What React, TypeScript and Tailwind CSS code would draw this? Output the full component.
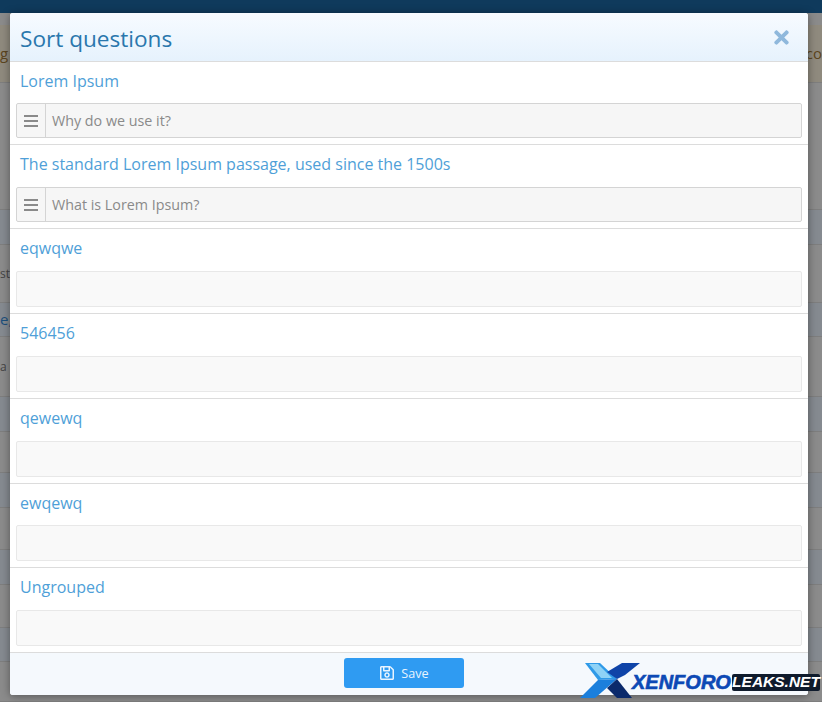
import React from "react";
import { FaRegSave, FaTimes } from "react-icons/fa";

const groups = [
  { title: "Lorem Ipsum", item: "Why do we use it?", rowH: "h-[83px]", titleH: "h-[38px]", gap: "mb-[3px]" },
  { title: "The standard Lorem Ipsum passage, used since the 1500s", item: "What is Lorem Ipsum?", rowH: "h-[84px]", titleH: "h-[38px]", gap: "mb-[4px]" },
  { title: "eqwqwe", rowH: "h-[85px]", titleH: "h-[38px]", gap: "mb-[4px]" },
  { title: "546456", rowH: "h-[85px]", titleH: "h-[38px]", gap: "mb-[4px]" },
  { title: "qewewq", rowH: "h-[85px]", titleH: "h-[38px]", gap: "mb-[4px]" },
  { title: "ewqewq", rowH: "h-[84px]", titleH: "h-[38px]", gap: "mb-[3px]" },
  { title: "Ungrouped", rowH: "h-[85px]", titleH: "h-[38px]", gap: "mb-[4px]" },
];

// rows of the dimmed forum page behind the overlay
const backdropRows = [
  { h: "h-[58px]", bg: "bg-[#8f8a7e]", left: "g", right: "co", text: "text-[#5c4520] text-[15px]" },
  { h: "h-[127px]", bg: "bg-[#8b8b8b]" },
  { h: "h-[35px]", bg: "bg-[#858a90]" },
  { h: "h-[58px]", bg: "bg-[#8b8b8b]", left: "st", text: "text-[#444444] text-[12px]" },
  { h: "h-[34px]", bg: "bg-[#858a90]", left: "e,", text: "text-[#1d4f7c] text-[15px]" },
  { h: "h-[60px]", bg: "bg-[#8b8b8b]", left: "a", text: "text-[#444444] text-[12px]" },
  { h: "h-[35px]", bg: "bg-[#858a90]" },
  { h: "h-[41px]", bg: "bg-[#8b8b8b]" },
  { h: "h-[35px]", bg: "bg-[#858a90]" },
  { h: "h-[42px]", bg: "bg-[#8b8b8b]" },
  { h: "h-[35px]", bg: "bg-[#858a90]" },
  { h: "h-[43px]", bg: "bg-[#8b8b8b]" },
  { h: "h-[34px]", bg: "bg-[#858a90]" },
  { h: "h-[40px]", bg: "bg-[#8b8b8b]" },
];

function DragHandle() {
  return (
    <svg width="14" height="12" viewBox="0 0 14 12" className="mt-px text-[#8a8a8a]">
      <path d="M0 1h14M0 6h14M0 11h14" stroke="currentColor" strokeWidth="2" />
    </svg>
  );
}

function Logo() {
  return (
    <div className="absolute left-[580px] top-[660px] h-[42px] w-[242px]">
      <svg width="62" height="42" viewBox="0 0 62 42" className="absolute left-0 top-0">
        <path d="M5 3 H20 L37 19 L18 20 Z" fill="#2f9ae8" />
        <path d="M9 4 H18 L32 18 L21 18 Z" fill="#8ed2f6" />
        <path d="M18 20 L37 19 L15 38 H0 Z" fill="#1b7fdc" />
        <path d="M60 3 H42 L27 12 L37 19 L45 15 Z" fill="#0f44a8" />
        <path d="M37 19 L27 28 L37 38 H52 Z" fill="#0b2a6b" />
      </svg>
      <div className="absolute left-[52px] top-[12px] flex items-center font-['Liberation_Sans',sans-serif] font-bold italic leading-none">
        <span className="w-[100px] text-[20px] text-[#0d49b5] [-webkit-text-stroke:0.6px_#0d49b5]">XENFORO</span>
        <span className="flex h-[17px] w-[88px] items-center justify-center rounded-[2px] bg-[#0f1b2c] text-[15.5px] text-white">LEAKS.NET</span>
      </div>
    </div>
  );
}

export default function App() {
  return (
    <div className="relative h-[702px] w-[822px] overflow-hidden bg-[#8b8b8b] font-['Open_Sans',sans-serif]">
      <div className="h-[13px] bg-[#0f3a5c]" />
      <div className="h-[12px] bg-[#8b8b8b]" />
      {backdropRows.map((row, i) => (
        <div
          key={i}
          className={`flex items-center justify-between overflow-hidden border-b border-[#7e7e7e] ${row.h} ${row.bg} ${row.text ?? ""}`}
        >
          <span>{row.left}</span>
          <span className="whitespace-nowrap">{row.right}</span>
        </div>
      ))}

      {/* Modal */}
      <div className="absolute left-[10px] top-[13px] flex h-[682px] w-[798px] flex-col overflow-hidden rounded-[3px] bg-white shadow-[0_1px_8px_rgba(0,0,0,0.4)]">
        <div className="flex h-[49px] shrink-0 items-center justify-between border-b border-[#dcdcdc] bg-gradient-to-b from-[#f7fbff] to-[#e6f2fd] pl-[10px] pr-[16px]">
          <h1 className="pt-[3px] text-[22.6px] text-[#2a77ad]">Sort questions</h1>
          <FaTimes className="mt-[1px] text-[#8fb8dc]" size={21} />
        </div>

        {groups.map((g, i) => (
          <div key={i} className={`flex shrink-0 flex-col border-b border-[#dcdcdc] px-[6px] ${g.rowH}`}>
            <div className={`flex items-center px-1 text-base text-[#4f9fd8] ${g.titleH} ${g.gap}`}>{g.title}</div>
            {g.item ? (
              <div className="flex h-[35px] rounded-[2px] border border-[#d4d4d4] bg-[#f6f6f6]">
                <div className="flex w-[29px] items-center justify-center border-r border-[#d4d4d4]">
                  <DragHandle />
                </div>
                <div className="flex items-center pl-[6px] pt-px text-[14.3px] text-[#8a8a8a]">{g.item}</div>
              </div>
            ) : (
              <div className="h-[36px] rounded-[2px] border border-[#e8e8e8] bg-[#f9f9f9]" />
            )}
          </div>
        ))}

        <div className="flex flex-1 items-start justify-center bg-[#f5f9fd] pr-[10px] pt-[5px]">
          <button className="flex h-[30px] w-[120px] items-center justify-center gap-[6px] rounded-[3px] bg-[#2f9bf2] text-[12.6px] text-[#e8f4ff]">
            <FaRegSave size={16} />
            <span className="pt-[2px]">Save</span>
          </button>
        </div>
      </div>

      <Logo />
    </div>
  );
}
